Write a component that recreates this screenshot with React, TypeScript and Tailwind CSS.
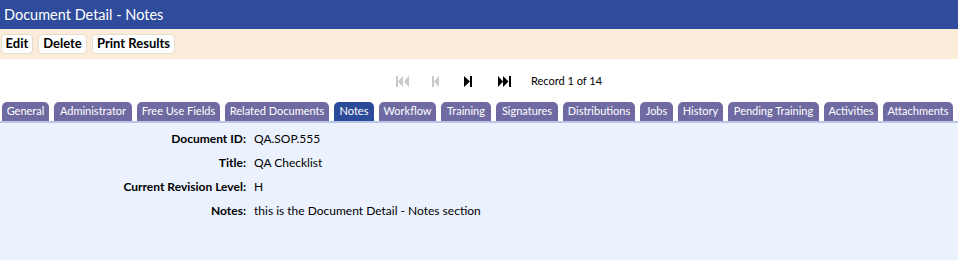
import React from "react";

const tabs = [
  { label: "General", w: "w-[47px]" },
  { label: "Administrator", w: "w-[78px]" },
  { label: "Free Use Fields", w: "w-[83px]" },
  { label: "Related Documents", w: "w-[104px]" },
  { label: "Notes", w: "w-[40px]", active: true },
  { label: "Workflow", w: "w-[57px]" },
  { label: "Training", w: "w-[50px]" },
  { label: "Signatures", w: "w-[62px]" },
  { label: "Distributions", w: "w-[72px]" },
  { label: "Jobs", w: "w-[33px]" },
  { label: "History", w: "w-[45px]" },
  { label: "Pending Training", w: "w-[91px]" },
  { label: "Activities", w: "w-[54px]" },
  { label: "Attachments", w: "w-[70px]" },
];

const rows = [
  ["Document ID:", "QA.SOP.555"],
  ["Title:", "QA Checklist"],
  ["Current Revision Level:", "H"],
  ["Notes:", "this is the Document Detail - Notes section"],
];

function FirstIcon({ color }: { color: string }) {
  return (
    <svg width="13" height="11" viewBox="0 0 13 11">
      <rect x="0" y="0" width="2" height="11" fill={color} />
      <polygon points="7,0 2,5.5 7,11" fill={color} />
      <polygon points="13,0 8,5.5 13,11" fill={color} />
    </svg>
  );
}
function PrevIcon({ color }: { color: string }) {
  return (
    <svg width="7" height="11" viewBox="0 0 7 11">
      <rect x="0" y="0" width="2" height="11" fill={color} />
      <polygon points="7,0 2,5.5 7,11" fill={color} />
    </svg>
  );
}
function NextIcon({ color }: { color: string }) {
  return (
    <svg width="8" height="11" viewBox="0 0 8 11">
      <polygon points="0,0 6,5.5 0,11" fill={color} />
      <rect x="6" y="0" width="2" height="11" fill={color} />
    </svg>
  );
}
function LastIcon({ color }: { color: string }) {
  return (
    <svg width="13" height="11" viewBox="0 0 13 11">
      <polygon points="0,0 5,5.5 0,11" fill={color} />
      <polygon points="5,0 10.5,5.5 5,11" fill={color} />
      <rect x="11" y="0" width="2" height="11" fill={color} />
    </svg>
  );
}

export default function App() {
  return (
    <div
      className="w-[958px] h-[260px] flex flex-col bg-white overflow-hidden"
      style={{ fontFamily: "Lato, 'Open Sans', sans-serif" }}
    >
      <div className="h-[29px] bg-[#2f4b9b] text-white text-[14.5px] flex items-center pl-[4px] shrink-0">
        Document Detail - Notes
      </div>
      <div className="h-[30px] bg-[#faecd9] flex items-center gap-[5px] pl-[1px] shrink-0">
        <button className="h-[20px] w-[32px] bg-white rounded-[4px] border border-[#e6dccd] text-[13px] font-bold text-black flex items-center justify-center">
          Edit
        </button>
        <button className="h-[20px] w-[49px] bg-white rounded-[4px] border border-[#e6dccd] text-[13px] font-bold text-black flex items-center justify-center">
          Delete
        </button>
        <button className="h-[20px] w-[83px] bg-white rounded-[4px] border border-[#e6dccd] text-[13px] font-bold text-black flex items-center justify-center">
          Print Results
        </button>
      </div>
      <div className="h-[42px] flex items-center shrink-0 pt-[2px]">
        <div className="ml-[396px] flex items-center">
          <FirstIcon color="#c8c8c8" />
          <div className="ml-[23px]">
            <PrevIcon color="#c8c8c8" />
          </div>
          <div className="ml-[25px]">
            <NextIcon color="#000" />
          </div>
          <div className="ml-[26px]">
            <LastIcon color="#000" />
          </div>
          <span className="ml-[20px] text-[11px] text-black">Record 1 of 14</span>
        </div>
      </div>
      <div className="flex items-end gap-[5px] pl-[2px] h-[20px] shrink-0">
        {tabs.map((t) => (
          <div
            key={t.label}
            className={`${t.w} h-[19px] rounded-t-[5px] text-white text-[11px] flex items-center justify-center whitespace-nowrap ${
              t.active ? "bg-[#2c4a9a]" : "bg-[#6f6ba2]"
            }`}
          >
            {t.label}
          </div>
        ))}
      </div>
      <div className="h-[2px] bg-[#b8c7e6] shrink-0" />
      <div className="flex-1 bg-[#ebf2fe] pt-[4px]">
        {rows.map(([k, v]) => (
          <div key={k} className="flex items-center h-[24px] text-[12px] text-black">
            <div className="w-[246px] text-right font-bold">{k}</div>
            <div className="ml-[8px]">{v}</div>
          </div>
        ))}
      </div>
    </div>
  );
}
